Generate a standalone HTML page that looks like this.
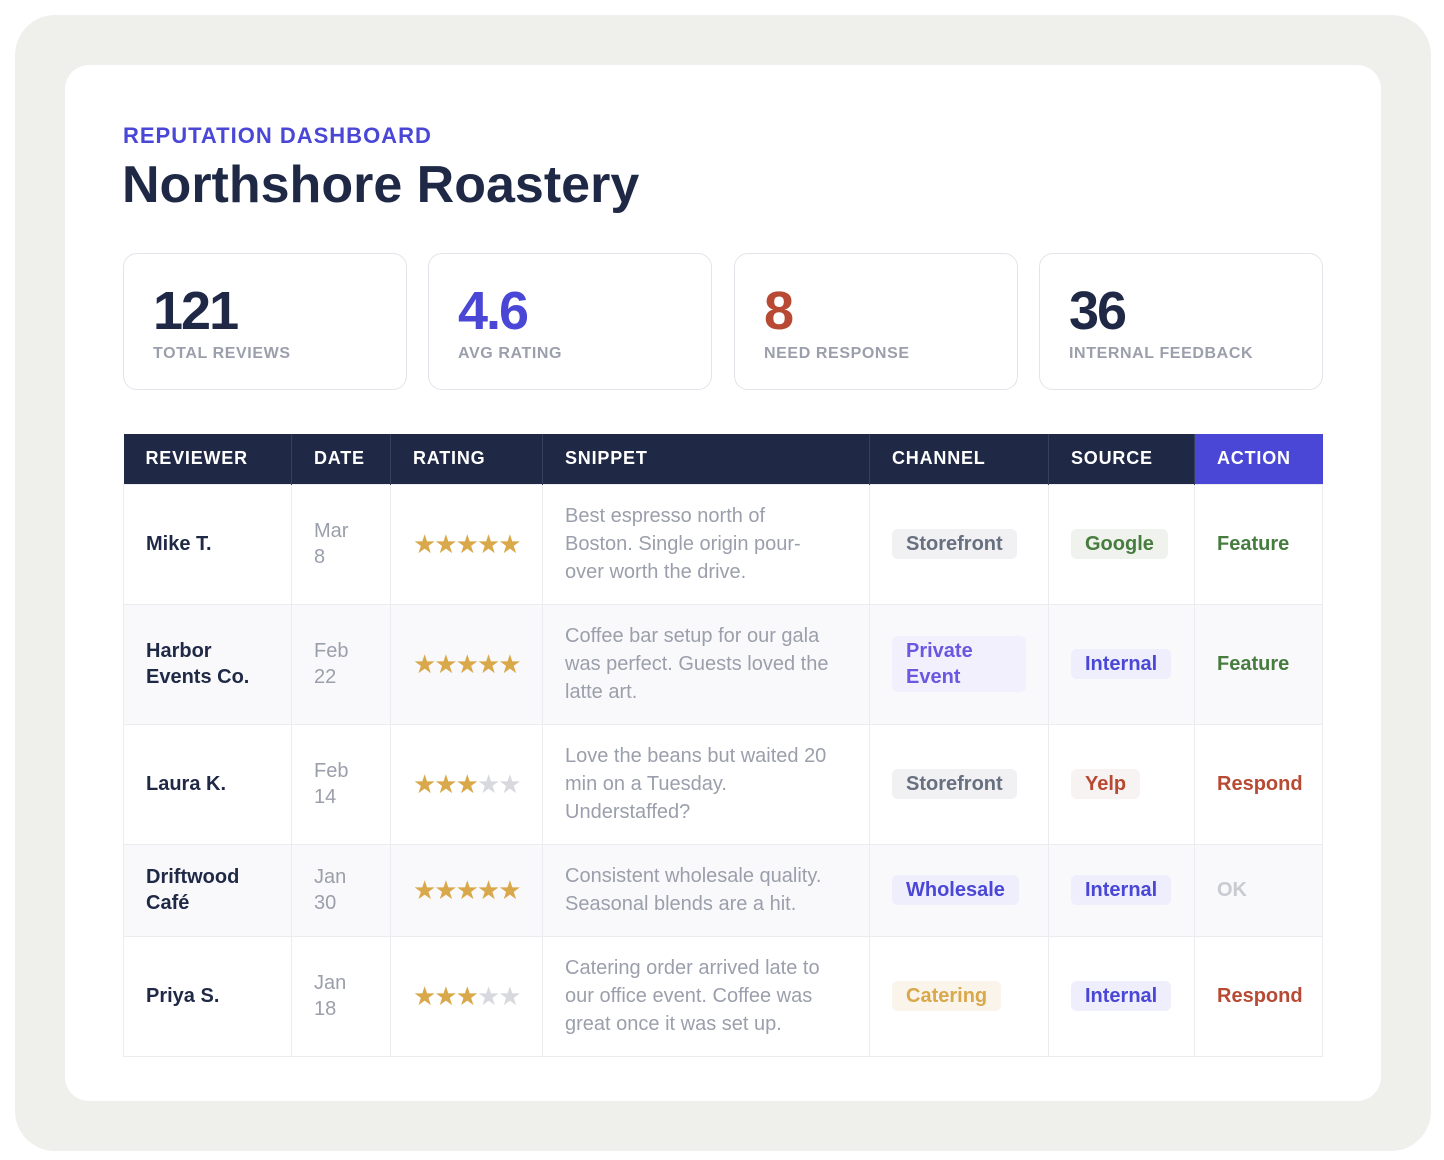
<!DOCTYPE html>
<html><head><meta charset="utf-8"><style>
*{box-sizing:border-box;margin:0;padding:0}
body{width:1444px;height:1160px;background:#fff;font-family:"Liberation Sans",Arial,sans-serif;color:#1f2946}
.outer{position:absolute;left:15px;top:15px;width:1416px;height:1136px;background:#efefeb;border-radius:40px}
.card{position:absolute;left:65px;top:65px;width:1316px;height:1036px;background:#fff;border-radius:24px}
.eyebrow{position:absolute;left:58px;top:58px;font-size:22px;font-weight:700;color:#4a47d6;letter-spacing:1px}
h1{position:absolute;left:57px;top:90px;font-size:52px;font-weight:700;color:#1f2946;letter-spacing:0}
.stat{position:absolute;top:188px;width:284px;height:137px;border:1px solid #e3e4ea;border-radius:14px}
.stat .n{position:absolute;left:29px;top:26px;font-size:54px;font-weight:700;letter-spacing:-2px}
.stat .l{position:absolute;left:29px;top:91px;font-size:16px;font-weight:700;color:#9a9fab;letter-spacing:0.6px}
table{position:absolute;left:58px;top:369px;width:1199px;border-collapse:collapse;font-size:20px;table-layout:fixed}
th{background:#1f2946;color:#fff;height:50px;text-align:left;padding:0 22px;font-size:18px;letter-spacing:0.8px;border-left:1px solid #34405c}
th.act{background:#4a47d6}
td{padding:0 22px;border:1px solid #ebecf0;vertical-align:middle;line-height:26px}
tr.alt td{background:#f9f9fb}
.nm{font-weight:700;color:#1f2946}
.dt{color:#9a9fab}
.sn{color:#9a9fab;line-height:28px;padding-right:36px}
.st{color:#d9a84a;font-size:26px;letter-spacing:-2px;white-space:nowrap}
.st i{font-style:normal;color:#d8d9df}
.b{display:inline-block;padding:2px 14px;border-radius:6px;font-weight:700;line-height:26px}
.g{background:#f1f1f4;color:#68707f}
.p{background:#f2f0fd;color:#6a58e0}
.i{background:#eeeefc;color:#4a47d6}
.go{background:#f0f2ed;color:#467d3f}
.y{background:#f7f3f2;color:#b84a34}
.c{background:#faf4ea;color:#d9a84a}
.f{color:#467d3f;font-weight:700}
.r{color:#b84a34;font-weight:700}
.ok{color:#c9cbd2;font-weight:700}
</style></head><body>
<div class="outer"></div>
<div class="card">
<div class="eyebrow">REPUTATION DASHBOARD</div>
<h1>Northshore Roastery</h1>
<div class="stat" style="left:58px"><div class="n">121</div><div class="l">TOTAL REVIEWS</div></div>
<div class="stat" style="left:363px"><div class="n" style="color:#4a47d6">4.6</div><div class="l">AVG RATING</div></div>
<div class="stat" style="left:669px"><div class="n" style="color:#b84a34">8</div><div class="l">NEED RESPONSE</div></div>
<div class="stat" style="left:974px"><div class="n">36</div><div class="l">INTERNAL FEEDBACK</div></div>
<table>
<colgroup><col style="width:168px"><col style="width:99px"><col style="width:152px"><col style="width:327px"><col style="width:179px"><col style="width:146px"><col style="width:128px"></colgroup>
<tr><th style="border-left:none">REVIEWER</th><th>DATE</th><th>RATING</th><th>SNIPPET</th><th>CHANNEL</th><th>SOURCE</th><th class="act">ACTION</th></tr>
<tr style="height:120px"><td class="nm">Mike T.</td><td class="dt">Mar<br>8</td><td class="st">★★★★★</td><td class="sn">Best espresso north of Boston. Single origin pour-over worth the drive.</td><td><span class="b g">Storefront</span></td><td><span class="b go">Google</span></td><td class="f">Feature</td></tr>
<tr class="alt" style="height:120px"><td class="nm">Harbor Events Co.</td><td class="dt">Feb<br>22</td><td class="st">★★★★★</td><td class="sn">Coffee bar setup for our gala was perfect. Guests loved the latte art.</td><td><span class="b p" style="width:134px">Private Event</span></td><td><span class="b i">Internal</span></td><td class="f">Feature</td></tr>
<tr style="height:120px"><td class="nm">Laura K.</td><td class="dt">Feb<br>14</td><td class="st">★★★<i>★★</i></td><td class="sn">Love the beans but waited 20 min on a Tuesday. Understaffed?</td><td><span class="b g">Storefront</span></td><td><span class="b y">Yelp</span></td><td class="r">Respond</td></tr>
<tr class="alt" style="height:92px"><td class="nm">Driftwood Café</td><td class="dt">Jan<br>30</td><td class="st">★★★★★</td><td class="sn">Consistent wholesale quality. Seasonal blends are a hit.</td><td><span class="b i">Wholesale</span></td><td><span class="b i">Internal</span></td><td class="ok">OK</td></tr>
<tr style="height:120px"><td class="nm">Priya S.</td><td class="dt">Jan<br>18</td><td class="st">★★★<i>★★</i></td><td class="sn">Catering order arrived late to our office event. Coffee was great once it was set up.</td><td><span class="b c">Catering</span></td><td><span class="b i">Internal</span></td><td class="r">Respond</td></tr>
</table>
</div>
</body></html>
